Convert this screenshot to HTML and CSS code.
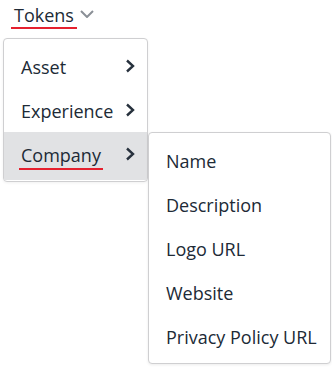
FILE: index.html
```html
<!DOCTYPE html>
<html lang="en">
<head>
<meta charset="utf-8">
<title>Tokens menu</title>
<link rel="stylesheet" href="styles.css">
</head>
<body>
<div class="page">
  <div class="trigger">
    <span class="trigger-label">Tokens</span>
    <svg class="chev-down" width="14" height="8" viewBox="0 0 14 8" aria-hidden="true"><polyline points="1,1 7,7 13,1" fill="none" stroke="#8b9097" stroke-width="2"/></svg>
  </div>
  <ul class="menu">
    <li class="item">
      <span class="label">Asset</span>
      <svg class="chev-right" width="10" height="14" viewBox="0 0 10 14" aria-hidden="true"><polyline points="2,1.5 8,7 2,12.5" fill="none" stroke="#27313d" stroke-width="2.4"/></svg>
    </li>
    <li class="item">
      <span class="label">Experience</span>
      <svg class="chev-right" width="10" height="14" viewBox="0 0 10 14" aria-hidden="true"><polyline points="2,1.5 8,7 2,12.5" fill="none" stroke="#27313d" stroke-width="2.4"/></svg>
    </li>
    <li class="item item-active">
      <span class="label label-marked">Company</span>
      <svg class="chev-right" width="10" height="14" viewBox="0 0 10 14" aria-hidden="true"><polyline points="2,1.5 8,7 2,12.5" fill="none" stroke="#27313d" stroke-width="2.4"/></svg>
      <ul class="submenu">
        <li class="sub-item">Name</li>
        <li class="sub-item">Description</li>
        <li class="sub-item">Logo URL</li>
        <li class="sub-item">Website</li>
        <li class="sub-item">Privacy Policy URL</li>
      </ul>
    </li>
  </ul>
</div>
</body>
</html>
```

FILE: styles.css
```css
html, body {
  margin: 0;
  padding: 0;
  background: #ffffff;
}

body {
  font-family: "Open Sans", "Noto Sans", sans-serif;
  font-size: 18px;
  color: #202a36;
}

.page {
  width: 332px;
  height: 367px;
  overflow: hidden;
}

.trigger {
  display: flex;
  align-items: flex-start;
  padding: 3px 0 0 11px;
  line-height: 24px;
}

.trigger-label {
  padding: 0 3px;
  border-bottom: 2px solid #e5202e;
}

.chev-down {
  margin: 7px 0 0 3px;
}

.menu {
  list-style: none;
  margin: 9px 0 0 3px;
  padding: 5px 0 1px;
  width: 143px;
  border: 1px solid #cfcfd1;
  border-radius: 4px;
  background: #ffffff;
  box-shadow: 0 1px 3px rgba(0, 0, 0, 0.06);
  position: relative;
}

.item {
  display: flex;
  justify-content: space-between;
  align-items: flex-start;
  height: 44px;
  box-sizing: border-box;
  padding: 11px 12px 9px 17px;
  line-height: 24px;
  position: relative;
}

.item-active {
  height: 48px;
  background: #e1e2e4;
}

.label-marked {
  margin-left: -2px;
  padding: 0 2px 1px;
  border-bottom: 2px solid #e5202e;
}

.chev-right {
  margin-top: 4px;
}

.submenu {
  list-style: none;
  margin: 0;
  padding: 5px 0;
  position: absolute;
  top: 0;
  left: calc(100% + 1px);
  width: 181px;
  border: 1px solid #cfcfd1;
  border-radius: 4px;
  background: #ffffff;
  box-shadow: 0 1px 3px rgba(0, 0, 0, 0.08);
}

.sub-item {
  height: 44px;
  box-sizing: border-box;
  padding: 11px 12px 9px 17px;
  line-height: 24px;
  white-space: nowrap;
}
```
